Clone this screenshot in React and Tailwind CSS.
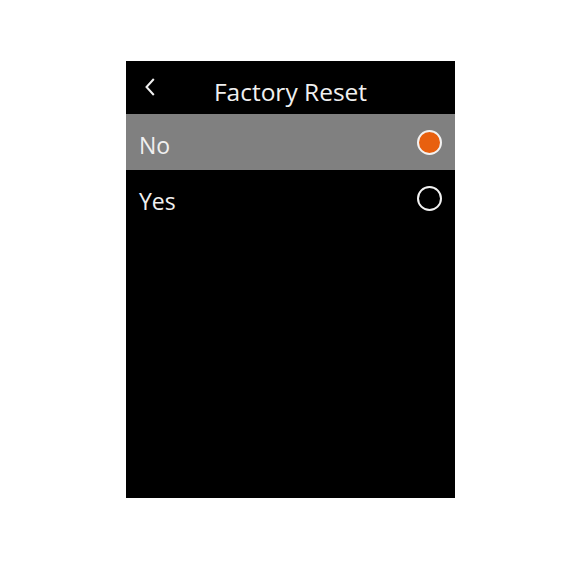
import React, { useState } from "react";

const font = { fontFamily: '"Open Sans", "Noto Sans", sans-serif' };

const Radio = ({ checked }) => (
  <div
    className={
      "w-[25px] h-[25px] rounded-full border-2 border-[#f2f2f2] " +
      (checked ? "bg-[#e8600f]" : "bg-black")
    }
  />
);

const Row = ({ label, checked, onClick }) => (
  <div
    onClick={onClick}
    className={
      "h-[56px] flex justify-between pl-[13px] pr-[13px] cursor-pointer " +
      (checked ? "bg-[#808080]" : "bg-black")
    }
  >
    <span className="pt-[16px] text-[23px] leading-[31px] font-medium text-[#f0f0f0]">{label}</span>
    <div className="flex items-center">
      <Radio checked={checked} />
    </div>
  </div>
);

export default function App() {
  const [choice, setChoice] = useState("No");

  return (
    <div className="w-[582px] h-[562px] bg-white pt-[61px] pl-[126px]" style={font}>
      <div className="w-[329px] h-[437px] bg-black flex flex-col">
        {/* header */}
        <div className="relative h-[53px] flex justify-center">
          <svg
            className="absolute left-[19px] top-[17px]"
            width="10"
            height="18"
            viewBox="0 0 10 18"
            fill="none"
          >
            <path d="M8.8 1 L1.5 9 L8.8 17" stroke="#f0f0f0" strokeWidth="2" />
          </svg>
          <span className="pt-[14px] text-[24.5px] leading-[34px] font-medium text-[#f0f0f0]">Factory Reset</span>
        </div>

        <Row label="No" checked={choice === "No"} onClick={() => setChoice("No")} />
        <Row label="Yes" checked={choice === "Yes"} onClick={() => setChoice("Yes")} />
      </div>
    </div>
  );
}
